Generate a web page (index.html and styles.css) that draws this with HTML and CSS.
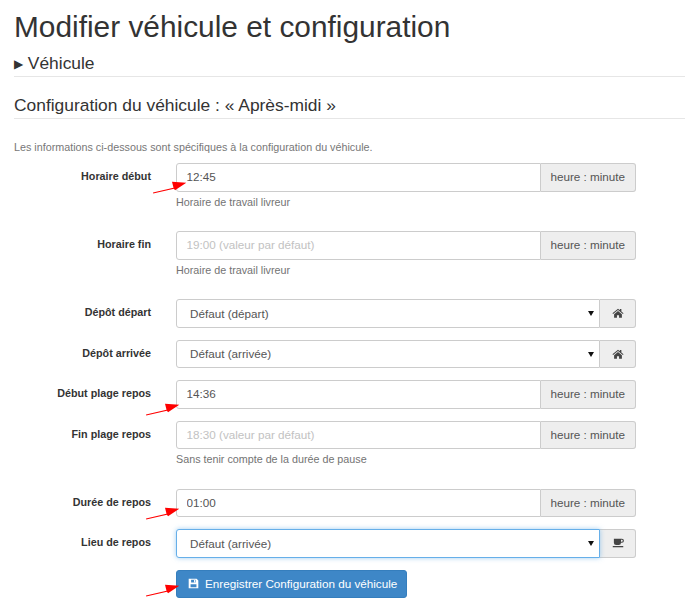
FILE: index.html
```html
<!DOCTYPE html>
<html lang="fr">
<head>
<meta charset="utf-8">
<title>Modifier véhicule et configuration</title>
<link rel="stylesheet" href="styles.css">
</head>
<body>
<svg class="defs" width="0" height="0" aria-hidden="true">
  <defs>
    <symbol id="arrow" viewBox="0 0 36 16">
      <path d="M1 14.500 L21.500 9.800 L20 3.800 L34.300 4.800 L23 12.200 L22 10.800 L1.200 15.400z" fill="#f00"/>
    </symbol>
    <symbol id="home" viewBox="0 0 16 16">
      <path d="M8 2.200 L.6 8.400l.9 1L8 4l6.500 5.400.9-1-2.900-2.400V2.800h-2v1.600z" fill="#444"/>
      <path d="M2.800 9.700 8 5.300l5.200 4.400v4.500H9.400v-3.300H6.600v3.300H2.800z" fill="#444"/>
    </symbol>
    <symbol id="cup" viewBox="0 0 16 16">
      <path d="M2.500 2.200h10.700a2.400 2.400 0 0 1 0 5.400H12a3 3 0 0 1-3 3H5.500a3 3 0 0 1-3-3zM12 3.500v2.800h1a1.400 1.400 0 0 0 0-2.800z" fill="#444" fill-rule="evenodd"/>
      <rect x="1" y="12" width="14" height="1.700" fill="#444"/>
    </symbol>
    <symbol id="floppy" viewBox="0 0 16 16">
      <path d="M1 1h11.500L15 3.500V15H1zM4.500 2.500v4h6.500v-4zM8.800 3h1.400v3H8.800zM3.700 9v4.500h8.600V9z" fill="#fff" fill-rule="evenodd"/>
    </symbol>
  </defs>
</svg>
<main class="page">
  <h1 class="title">Modifier véhicule et configuration</h1>
  <h2 class="section section-first"><span class="caret">▶</span> Véhicule</h2>
  <h2 class="section section-second">Configuration du véhicule : « Après-midi »</h2>
  <p class="intro">Les informations ci-dessous sont spécifiques à la configuration du véhicule.</p>

  <form class="form">
    <div class="row with-help">
      <label class="label">Horaire début</label>
      <div class="control">
        <div class="group">
          <input class="input" type="text" value="12:45">
          <span class="addon">heure : minute</span>
        </div>
        <p class="help">Horaire de travail livreur</p>
      </div>
      <svg class="arrow arrow-first"><use href="#arrow"/></svg>
    </div>

    <div class="row with-help">
      <label class="label">Horaire fin</label>
      <div class="control">
        <div class="group">
          <input class="input" type="text" placeholder="19:00 (valeur par défaut)">
          <span class="addon">heure : minute</span>
        </div>
        <p class="help">Horaire de travail livreur</p>
      </div>
    </div>

    <div class="row">
      <label class="label">Dépôt départ</label>
      <div class="control">
        <div class="group">
          <select class="select"><option>Défaut (départ)</option></select>
          <span class="addon addon-icon"><svg class="icon"><use href="#home"/></svg></span>
        </div>
      </div>
    </div>

    <div class="row">
      <label class="label">Dépôt arrivée</label>
      <div class="control">
        <div class="group">
          <select class="select"><option>Défaut (arrivée)</option></select>
          <span class="addon addon-icon"><svg class="icon"><use href="#home"/></svg></span>
        </div>
      </div>
    </div>

    <div class="row">
      <label class="label">Début plage repos</label>
      <div class="control">
        <div class="group">
          <input class="input" type="text" value="14:36">
          <span class="addon">heure : minute</span>
        </div>
      </div>
      <svg class="arrow arrow-start"><use href="#arrow"/></svg>
    </div>

    <div class="row with-help">
      <label class="label">Fin plage repos</label>
      <div class="control">
        <div class="group">
          <input class="input" type="text" placeholder="18:30 (valeur par défaut)">
          <span class="addon">heure : minute</span>
        </div>
        <p class="help">Sans tenir compte de la durée de pause</p>
      </div>
    </div>

    <div class="row">
      <label class="label">Durée de repos</label>
      <div class="control">
        <div class="group">
          <input class="input" type="text" value="01:00">
          <span class="addon">heure : minute</span>
        </div>
      </div>
      <svg class="arrow arrow-length"><use href="#arrow"/></svg>
    </div>

    <div class="row">
      <label class="label">Lieu de repos</label>
      <div class="control">
        <div class="group">
          <select class="select select-focus"><option>Défaut (arrivée)</option></select>
          <span class="addon addon-icon"><svg class="icon"><use href="#cup"/></svg></span>
        </div>
      </div>
    </div>

    <div class="row row-submit">
      <div class="label"></div>
      <div class="control">
        <button class="button" type="button"><svg class="icon icon-save"><use href="#floppy"/></svg>Enregistrer Configuration du véhicule</button>
      </div>
      <svg class="arrow arrow-submit"><use href="#arrow"/></svg>
    </div>
  </form>
</main>
</body>
</html>
```

FILE: styles.css
```css
* { box-sizing: border-box; }

html, body { margin: 0; padding: 0; background: #fff; }

body {
  font-family: "Liberation Sans", Arial, sans-serif;
  color: #333;
  overflow: hidden;
  height: 603px;
}

.defs { position: absolute; }

.page { padding: 0 5px 0 14px; }

.title {
  margin: 0;
  padding-top: 10px;
  font-size: 29.85px;
  line-height: 34px;
  font-weight: 400;
}

.section {
  margin: 0;
  font-size: 17.4px;
  line-height: 20px;
  font-weight: 400;
  border-bottom: 1px solid #e6e6e6;
}

.section-first { padding: 9px 0 2px; }
.section-second { padding: 18px 0 3px; }

.caret { font-size: 12px; vertical-align: 1px; }

.intro {
  margin: 21px 0 0;
  font-size: 10.75px;
  line-height: 14px;
  color: #777;
}

.form { margin-top: 9px; }

.row {
  position: relative;
  display: flex;
  height: 28.5px;
  margin-bottom: 12px;
}

.row.with-help { margin-bottom: 39.5px; }

.label {
  flex: 0 0 137px;
  padding-top: 6px;
  font-size: 10.75px;
  line-height: 14px;
  font-weight: 700;
  text-align: right;
  color: #333;
}

.control {
  width: 460px;
  margin-left: 25px;
}

.group { display: flex; height: 28.5px; }

.input, .select {
  flex: 1;
  min-width: 0;
  height: 100%;
  font-family: inherit;
  font-size: 11.7px;
  color: #555;
  background-color: #fff;
  border: 1px solid #ccc;
  border-radius: 3px 0 0 3px;
  outline: none;
}

.input { padding: 0 9.500px 1px; }
.input::placeholder { color: #c2c2c2; opacity: 1; }

.select {
  padding: 0 20px 0 13px;
  appearance: none;
  background-image: url("data:image/svg+xml,%3Csvg xmlns='http://www.w3.org/2000/svg' width='6' height='6'%3E%3Cpath d='M0 1h6L3 6z' fill='%23111'/%3E%3C/svg%3E");
  background-repeat: no-repeat;
  background-position: right 5px center;
}

.select-focus {
  border-color: #66afe9;
  box-shadow: 0 0 5px rgba(102, 175, 233, .6);
  position: relative;
  z-index: 1;
}

.addon {
  flex: 0 0 95.5px;
  display: flex;
  align-items: center;
  justify-content: center;
  padding-bottom: 1px;
  font-size: 11.7px;
  color: #555;
  background: #eee;
  border: 1px solid #ccc;
  border-left: 0;
  border-radius: 0 3px 3px 0;
}

.addon-icon { flex-basis: 36px; padding-bottom: 0; }

.icon { width: 12px; height: 12px; display: block; }

.help {
  margin: 3px 0 0;
  font-size: 10.75px;
  line-height: 14px;
  color: #737373;
}

.button {
  display: flex;
  align-items: center;
  height: 28.5px;
  padding: 0 9px 0 11px;
  font-family: inherit;
  font-size: 11.7px;
  color: #fff;
  background: #3e87c7;
  border: 1px solid #357ebd;
  border-radius: 3px;
}

.icon-save { width: 11px; height: 11px; margin-right: 6px; }

.arrow {
  position: absolute;
  width: 36px;
  height: 16px;
  z-index: 2;
}

.arrow-first { left: 138px; top: 14.500px; }
.arrow-start { left: 131px; top: 19.500px; }
.arrow-length { left: 131px; top: 15.800px; }
.arrow-submit { left: 131px; top: 11.200px; }
```
